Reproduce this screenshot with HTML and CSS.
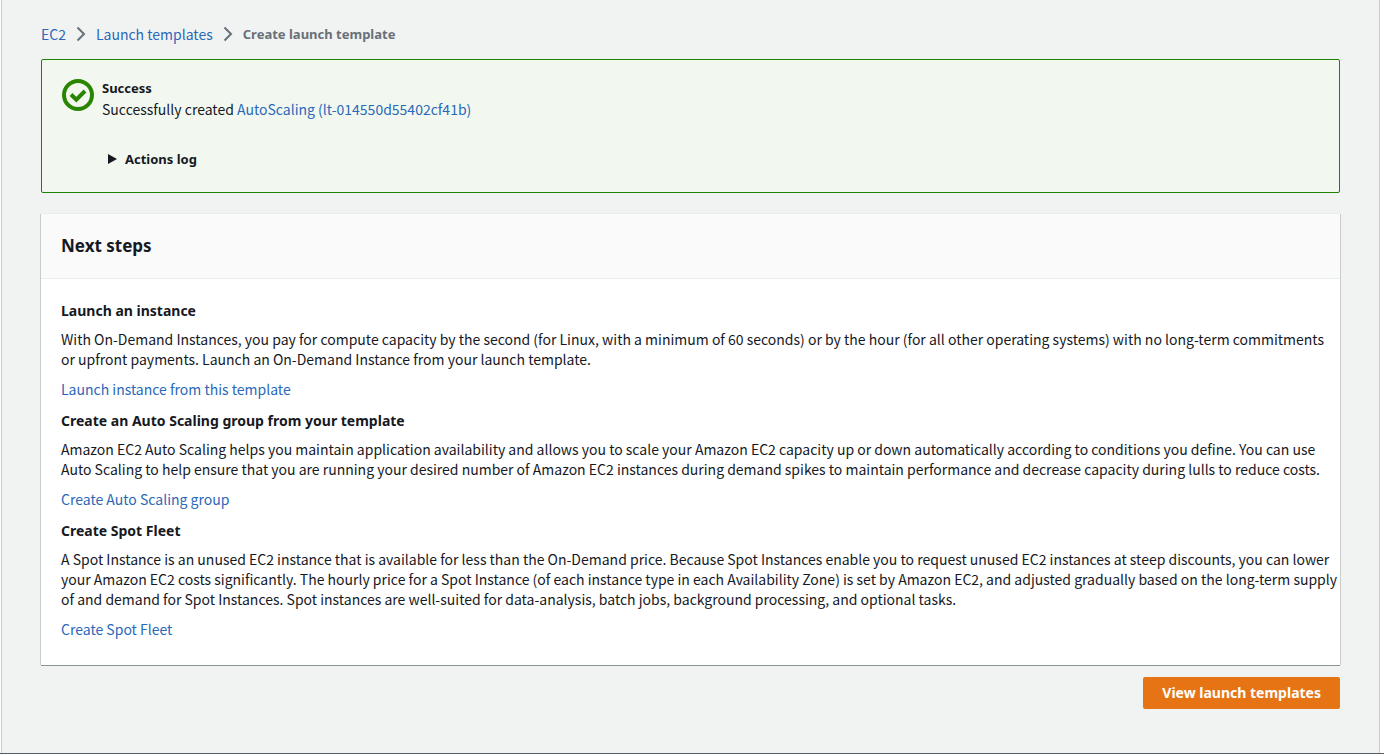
FILE: index.html
```
<!DOCTYPE html>
<html lang="en">
<head>
<meta charset="utf-8">
<title>Create launch template</title>
<link rel="stylesheet" href="styles.css">
</head>
<body>
<main class="page">
  <nav class="breadcrumbs" aria-label="Breadcrumbs">
    <a class="link" href="#">EC2</a>
    <svg class="chevron" viewBox="0 0 10 16" aria-hidden="true"><path d="M1.500 1.500 8 8l-6.500 6.500"/></svg>
    <a class="link" href="#">Launch templates</a>
    <svg class="chevron" viewBox="0 0 10 16" aria-hidden="true"><path d="M1.500 1.500 8 8l-6.500 6.500"/></svg>
    <span class="current" aria-current="page">Create launch template</span>
  </nav>

  <section class="alert" role="status">
    <svg class="alert-icon" viewBox="0 0 32 32" aria-hidden="true"><circle cx="16" cy="16" r="14"/><path d="m9 15.500 5.300 5.200 8.700-8.700"/></svg>
    <div class="alert-body">
      <h2 class="alert-title">Success</h2>
      <p class="alert-text">Successfully created <a class="link" href="#">AutoScaling (lt-014550d55402cf41b)</a></p>
      <button class="log-toggle" type="button" aria-expanded="false">
        <svg class="caret" viewBox="0 0 9 10" aria-hidden="true"><path d="M0 0v10l9-5z"/></svg>
        Actions log
      </button>
    </div>
  </section>

  <section class="card">
    <header class="card-header"><h1 class="card-title">Next steps</h1></header>
    <div class="card-body">
      <section class="step">
        <h2 class="step-title">Launch an instance</h2>
        <p class="step-text">With On-Demand Instances, you pay for compute capacity by the second (for Linux, with a minimum of 60 seconds) or by the hour (for all other operating systems) with no long-term commitments or upfront payments. Launch an On-Demand Instance from your launch template.</p>
        <a class="link" href="#">Launch instance from this template</a>
      </section>
      <section class="step">
        <h2 class="step-title">Create an Auto Scaling group from your template</h2>
        <p class="step-text">Amazon EC2 Auto Scaling helps you maintain application availability and allows you to scale your Amazon EC2 capacity up or down automatically according to conditions you define. You can use Auto Scaling to help ensure that you are running your desired number of Amazon EC2 instances during demand spikes to maintain performance and decrease capacity during lulls to reduce costs.</p>
        <a class="link" href="#">Create Auto Scaling group</a>
      </section>
      <section class="step">
        <h2 class="step-title">Create Spot Fleet</h2>
        <p class="step-text">A Spot Instance is an unused EC2 instance that is available for less than the On-Demand price. Because Spot Instances enable you to request unused EC2 instances at steep discounts, you can lower your Amazon EC2 costs significantly. The hourly price for a Spot Instance (of each instance type in each Availability Zone) is set by Amazon EC2, and adjusted gradually based on the long-term supply of and demand for Spot Instances. Spot instances are well-suited for data-analysis, batch jobs, background processing, and optional tasks.</p>
        <a class="link" href="#">Create Spot Fleet</a>
      </section>
    </div>
  </section>

  <div class="actions"><button class="primary" type="button">View launch templates</button></div>
</main>
</body>
</html>
```
FILE: styles.css
```
* { box-sizing: border-box; }
body {
  margin: 0;
  min-height: 100vh;
  display: flex;
  padding: 0 4px 0 1px;
  background: #fff;
  border-bottom: 1px solid #545b64;
  color: #16191f;
  font: 14px/20px "Noto Sans CJK SC", sans-serif;
}
h1, h2, p { margin: 0; }
h1, h2, .current, .log-toggle, .primary { font-family: "Noto Sans", sans-serif; font-weight: 700; }
.link { color: #2b68b8; text-decoration: none; }
.link:hover { text-decoration: underline; }
.page {
  flex: 1;
  min-width: 0;
  padding: 24px 39px;
  background: #f1f3f3;
  border: 1px solid #c8cccc;
  border-width: 0 1px;
}
.breadcrumbs { display: flex; align-items: center; gap: 10px; }
.chevron { width: 10px; height: 16px; fill: none; stroke: #687078; stroke-width: 2; }
.current { color: #687078; font-size: 13px; }
.alert {
  display: flex;
  gap: 8px;
  margin-top: 15px;
  padding: 17px 20px 23px;
  background: #f2f8f0;
  border: 1px solid #1d8102;
  border-radius: 2px;
}
.alert-icon { flex: none; width: 32px; height: 32px; margin-top: 2px; fill: none; stroke: #2a8500; stroke-width: 4; }
.alert-title { font-size: 13px; line-height: 22px; }
.alert-text { line-height: 20px; }
.log-toggle {
  display: flex;
  align-items: center;
  gap: 8px;
  margin-top: 30px;
  padding: 0 6px;
  border: 0;
  background: none;
  color: inherit;
  font-size: 13px;
  line-height: 20px;
}
.caret { width: 9px; height: 10px; fill: #16191f; }
.card {
  margin-top: 21px;
  background: #fff;
  box-shadow: 1px 0 0 #c8cccc, -1px 0 0 #c8cccc, 0 -1px 0 #eaeded, 0 1px 0 #879596;
}
.card-header { padding: 20px; background: #fafafa; border-bottom: 1px solid #eaeded; }
.card-title { font-size: 17px; line-height: 24px; }
.card-body { display: grid; gap: 11px; padding: 21px 0 26px 20px; }
.step-title { font-size: 14px; line-height: 22px; }
.step-text { margin: 7px 0 10px; }
.actions { display: flex; justify-content: flex-end; margin-top: 12px; }
.primary {
  padding: 6px 19px;
  border: 0;
  border-radius: 2px;
  background: #e77414;
  color: #fff;
  font-size: 14px;
  line-height: 20px;
}
```
